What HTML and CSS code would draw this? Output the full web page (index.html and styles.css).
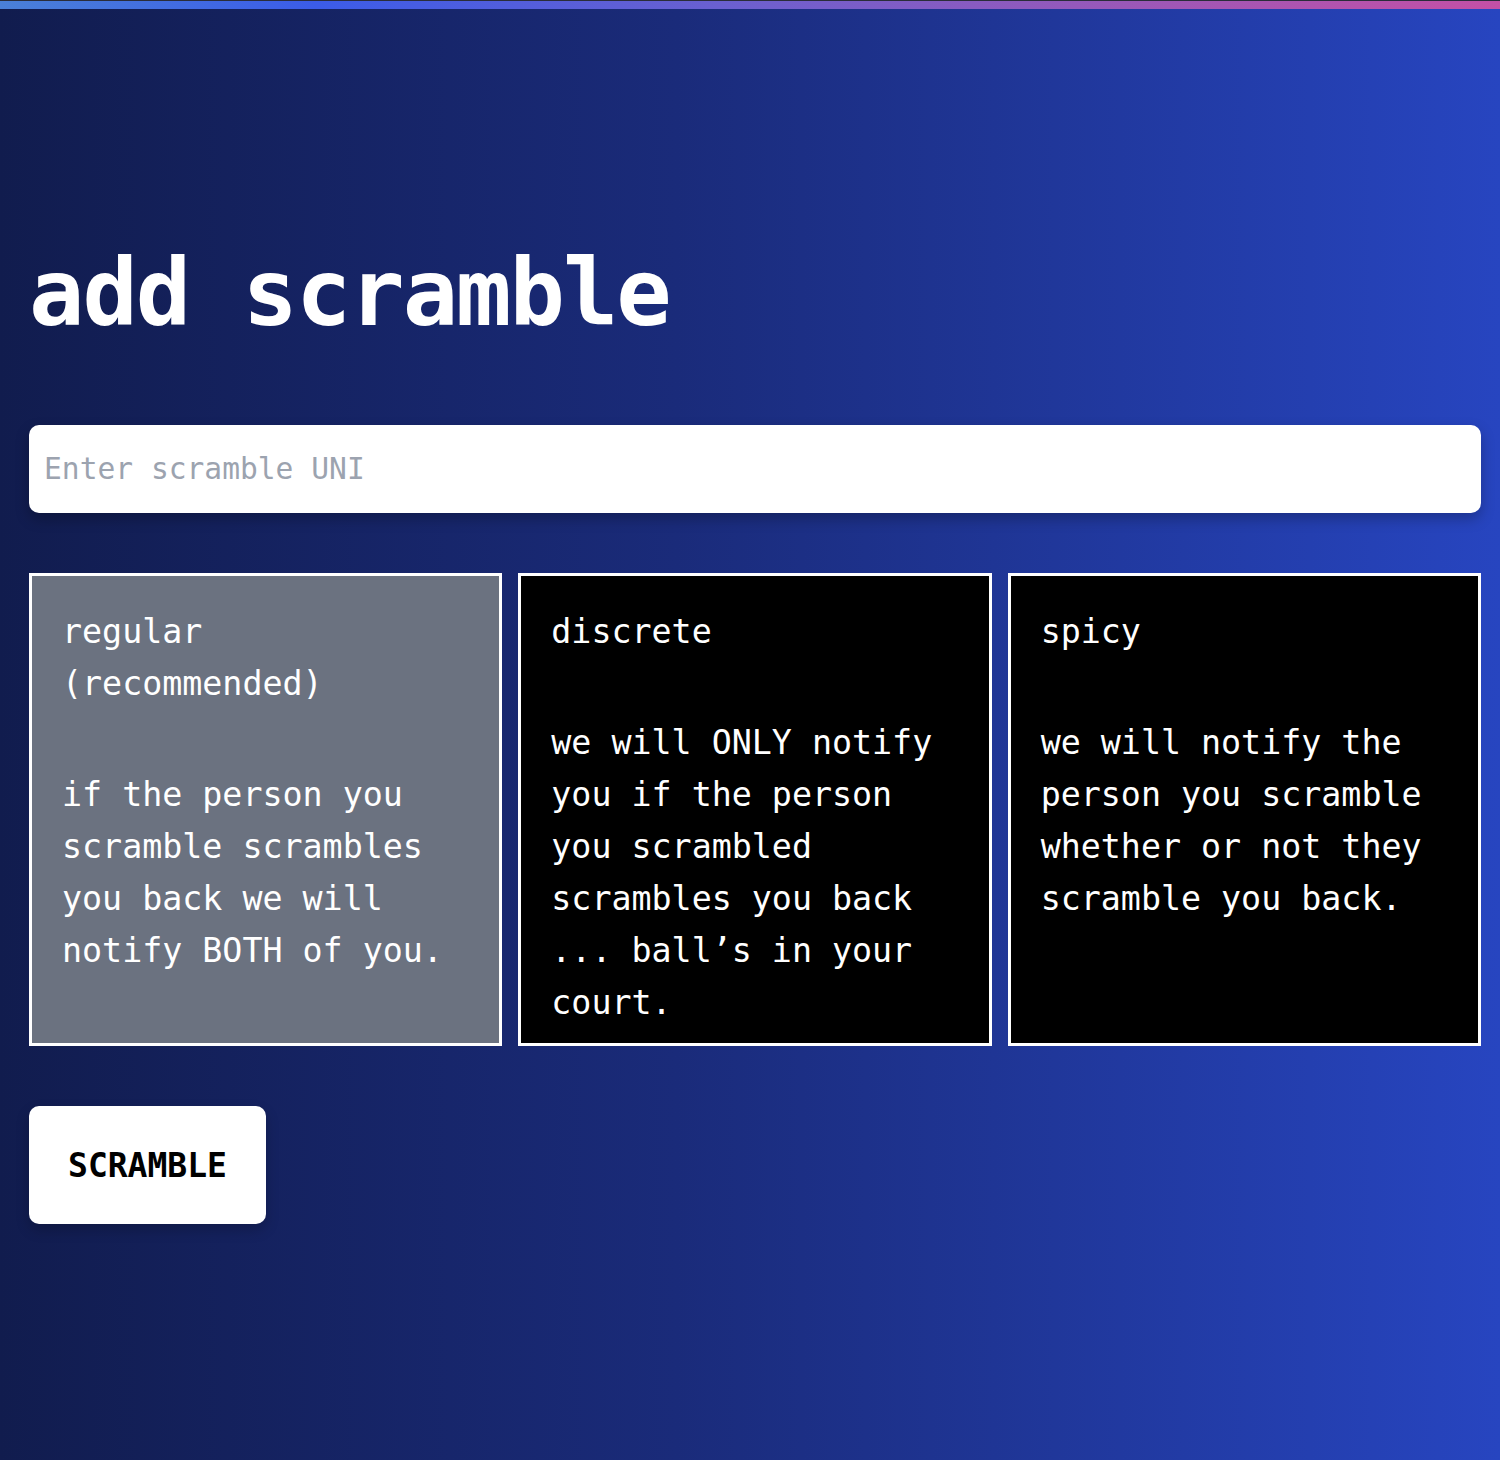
FILE: index.html
```html
<!DOCTYPE html>
<html lang="en">
<head>
<meta charset="utf-8">
<title>add scramble</title>
<link rel="stylesheet" href="styles.css">
</head>
<body>
<div class="topline"></div>
<div class="topbar"></div>
<main class="page">
  <h1 class="title">add scramble</h1>
  <input class="uni-input" type="text" placeholder="Enter scramble UNI">
  <div class="options">
    <div class="option option-selected">
      <p class="option-name">regular (recommended)</p>
      <p class="option-desc">if the person you scramble scrambles you back we will notify BOTH of you.</p>
    </div>
    <div class="option">
      <p class="option-name">discrete</p>
      <p class="option-desc">we will ONLY notify you if the person you scrambled scrambles you back ... ball’s in your court.</p>
    </div>
    <div class="option">
      <p class="option-name">spicy</p>
      <p class="option-desc">we will notify the person you scramble whether or not they scramble you back.</p>
    </div>
  </div>
  <button class="scramble-btn" type="button">SCRAMBLE</button>
</main>
</body>
</html>
```
FILE: styles.css
```css
html, body {
  margin: 0;
  padding: 0;
}

body {
  min-height: 1460px;
  background: linear-gradient(to right, #111c4e 0%, #1a2b7a 45%, #2745c0 100%);
  font-family: "DejaVu Sans Mono", "Liberation Mono", monospace;
  color: #ffffff;
}

.topline {
  height: 1px;
  background: #2a2d3a;
}

.topbar {
  height: 8px;
  background: linear-gradient(to right, #4a80d8 0%, #3b5ce8 21%, #6a60d0 48%, #9a58b8 75%, #c450a6 100%);
}

.page {
  padding: 0 19px 0 29px;
  display: flex;
  flex-direction: column;
  align-items: flex-start;
}

.title {
  margin: 241px 0 0 0;
  font-size: 92px;
  letter-spacing: -2px;
  line-height: 88px;
  font-weight: bold;
}

.uni-input {
  margin-top: 87px;
  box-sizing: border-box;
  width: 100%;
  height: 88px;
  border: none;
  border-radius: 10px;
  padding: 0 15px;
  font-family: "DejaVu Sans Mono", "Liberation Mono", monospace;
  font-size: 29.6px;
  color: #111111;
  background: #ffffff;
  box-shadow: 0 6px 14px rgba(0, 0, 0, 0.25);
  outline: none;
}

.uni-input::placeholder {
  color: #9ca3af;
}

.options {
  margin-top: 60px;
  width: 100%;
  display: grid;
  grid-template-columns: repeat(3, 1fr);
  gap: 16px;
}

.option {
  border: 3px solid #ffffff;
  background: #000000;
  padding: 30px 30px 14px 30px;
  font-size: 33.3px;
  line-height: 52px;
}

.option-selected {
  background: #6b7280;
}

.option p {
  margin: 0;
}

.option-name {
  margin-bottom: 59px !important;
}

.scramble-btn {
  margin-top: 60px;
  width: 237px;
  height: 118px;
  border: none;
  border-radius: 10px;
  background: #ffffff;
  color: #000000;
  font-family: "DejaVu Sans Mono", "Liberation Mono", monospace;
  font-weight: bold;
  font-size: 33px;
  padding: 0;
  box-shadow: 0 6px 14px rgba(0, 0, 0, 0.2);
}
```
